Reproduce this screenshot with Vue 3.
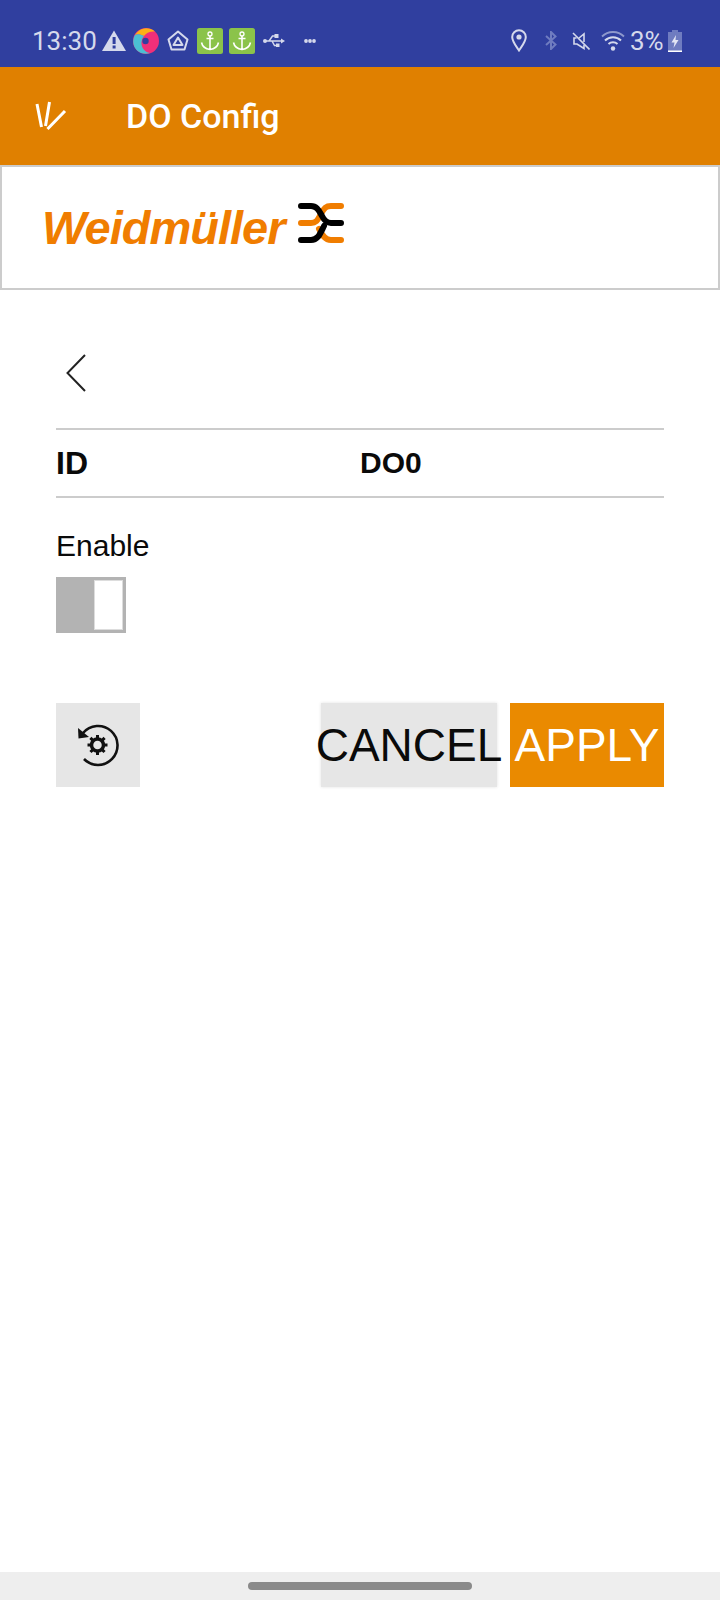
<template>
  <div class="page">
    <div class="status_bar">
      <span class="time">13:30</span>
      <svg class="ic warn" width="24" height="21" viewBox="0 0 24 21">
        <path d="M12 0.5 L24 21 H0 Z" fill="#d5d9ec" />
        <rect x="10.6" y="7" width="3" height="7" fill="#303f9f" />
        <rect x="10.6" y="15.5" width="3" height="3" fill="#303f9f" />
      </svg>
      <svg class="ic swirl" width="26" height="26" viewBox="0 0 26 26">
        <circle cx="13" cy="13" r="13" fill="#ef2f79" />
        <path d="M2 7 A13 13 0 0 1 22 3.5 C17 3 13 5 11 8 C7 6 4 6 2 7 Z" fill="#fbb117" />
        <path d="M2 7 C-2 14 1 22 8 25 C11 26 14 26 17 25 C11 24 8 19 8.5 14 C9 11 10 9 11 8 C7 6 4 6 2 7 Z" fill="#4bbfd3" />
        <circle cx="12.500" cy="13" r="3.200" fill="#303f9f" />
      </svg>
      <svg class="ic tri" width="22" height="21" viewBox="0 0 22 21">
        <path d="M11 1.5 L20.500 9.500 L17.500 19.500 H4.500 L1.500 9.500 Z" fill="none" stroke="#d5d9ec" stroke-width="2" stroke-linejoin="round" />
        <path d="M11 7.500 L15.500 15 H6.500 Z" fill="none" stroke="#d5d9ec" stroke-width="2" stroke-linejoin="round" />
      </svg>
      <svg v-for="n in 2" :key="n" class="ic anchor" width="26" height="26" viewBox="0 0 26 26">
        <rect width="26" height="26" rx="2.500" fill="#8bc34a" />
        <circle cx="13" cy="6" r="2" fill="none" stroke="#fff" stroke-width="1.300" />
        <path d="M13 8 V21 M9.500 10.500 H16.500 M4.500 14.500 C5.500 19 9 21 13 21.500 C17 21 20.500 19 21.500 14.500" fill="none" stroke="#fff" stroke-width="1.600" />
      </svg>
      <svg class="ic usb" width="22" height="16" viewBox="0 0 22 16">
        <path d="M2 8 H19 M6 8 L9.500 3 H12 M9 8 L11.500 12.500 H14" fill="none" stroke="#d5d9ec" stroke-width="1.500" />
        <circle cx="2" cy="8" r="2" fill="#d5d9ec" />
        <rect x="11.500" y="1" width="4" height="4" fill="#d5d9ec" />
        <rect x="13" y="10.500" width="3.500" height="3.500" fill="#d5d9ec" />
        <path d="M18 5.500 L22 8 L18 10.500 Z" fill="#d5d9ec" />
      </svg>
      <svg class="ic dots" width="12" height="4" viewBox="0 0 12 4">
        <circle cx="2" cy="2" r="1.900" fill="#d5d9ec" />
        <circle cx="6" cy="2" r="1.900" fill="#d5d9ec" />
        <circle cx="10" cy="2" r="1.900" fill="#d5d9ec" />
      </svg>
      <div class="status_right">
        <svg class="ic" width="16" height="23" viewBox="0 0 16 23">
          <path d="M8 21.500 C5 17 1.200 12.500 1.200 8 A6.800 6.800 0 0 1 14.800 8 C14.800 12.500 11 17 8 21.500 Z" fill="none" stroke="#d5d9ec" stroke-width="2" />
          <circle cx="8" cy="8" r="2.600" fill="#d5d9ec" />
        </svg>
        <svg class="ic bt" width="12" height="19" viewBox="0 0 12 19">
          <path d="M1 5 L10.500 13.500 L6 18 V1 L10.500 5.500 L1 14" fill="none" stroke="#6f7cc0" stroke-width="2" />
        </svg>
        <svg class="ic mute" width="18" height="18" viewBox="0 0 18 18">
          <path d="M12 10 V2 L7 6 M4.500 6 H2 V12 H5 L12 16.500 V13" fill="none" stroke="#d5d9ec" stroke-width="1.600" />
          <path d="M1 1 L17.500 17.500" stroke="#d5d9ec" stroke-width="1.600" />
        </svg>
        <svg class="ic wifi" width="24" height="21" viewBox="0 0 24 21">
          <path d="M1 6.500 C7 0.500 17 0.500 23 6.500" fill="none" stroke="#8e98cc" stroke-width="1.800" />
          <path d="M4 10.500 C8.500 6 15.500 6 20 10.500 M7.500 14 C10 11.800 14 11.800 16.500 14" fill="none" stroke="#d5d9ec" stroke-width="2" />
          <circle cx="12" cy="18.500" r="2.200" fill="#d5d9ec" />
        </svg>
        <span class="percent">3%</span>
        <svg class="ic batt" width="14" height="22" viewBox="0 0 14 22">
          <path d="M4 0 H10 V2 H14 V22 H0 V2 H4 Z" fill="#6f7cc0" />
          <rect x="0" y="20.500" width="14" height="1.500" fill="#fff" />
          <path d="M8 5 L3.500 12.500 H6.500 L5.500 18 L10.500 10 H7.500 Z" fill="#e3e6f4" />
        </svg>
      </div>
    </div>

    <header class="app_bar">
      <svg class="drawer" width="32" height="32" viewBox="0 0 32 32">
        <path d="M2 4 L6.500 27 M14.500 2 L10.500 26 M30 11 L12.500 29" fill="none" stroke="#fff" stroke-width="3" />
      </svg>
      <h1 class="title">DO Config</h1>
    </header>

    <div class="logo_box">
      <span class="logo_text">Weidmüller</span>
      <svg class="logo_mark" width="46" height="42" viewBox="0 0 46 42">
        <path d="M3 21 H13 C19 21 20 17 23 12 C26 6 28 4 33 4 H43" fill="none" stroke="#f07d00" stroke-width="6" stroke-linecap="round" />
        <path d="M3 4 H13 C19 4 21 9 24 14 C26 18 28 21 33 21 H43" fill="none" stroke="#000" stroke-width="6" stroke-linecap="round" />
        <path d="M21 27 C24 33 27 38 33 38 H43" fill="none" stroke="#f07d00" stroke-width="6" stroke-linecap="round" />
        <path d="M3 38 H13 C20 38 22 32 26 24" fill="none" stroke="#000" stroke-width="6" stroke-linecap="round" />
      </svg>
    </div>

    <main class="content">
      <svg class="back" width="20" height="38" viewBox="0 0 20 38">
        <path d="M19 1 L1.500 19 L19 37" fill="none" stroke="#222" stroke-width="2" />
      </svg>

      <div class="id_row">
        <span class="id_label">ID</span>
        <span class="id_value">DO0</span>
      </div>

      <p class="enable_label">Enable</p>
      <div class="toggle">
        <div class="knob"></div>
      </div>

      <div class="actions">
        <button class="btn icon_btn">
          <svg width="42" height="44" viewBox="0 0 42 44">
            <path d="M6 10 A19.500 19.500 0 1 1 7 36" fill="none" stroke="#111" stroke-width="2.600" />
            <path d="M1 5 L1.500 15.500 L12 14 Z" fill="#111" />
            <circle cx="20.500" cy="22" r="6" fill="none" stroke="#111" stroke-width="3.500" />
            <path d="M20.500 12 V32 M10.500 22 H30.500 M13.400 14.900 L27.600 29.100 M27.600 14.900 L13.400 29.100" stroke="#111" stroke-width="3" stroke-dasharray="3.500 13 3.500" />
          </svg>
        </button>
        <button class="btn cancel">CANCEL</button>
        <button class="btn apply">APPLY</button>
      </div>
    </main>

    <div class="nav_bar">
      <div class="nav_pill"></div>
    </div>
  </div>
</template>

<script setup>
</script>

<style>
html, body {
  margin: 0;
  background: #fff;
}
</style>

<style scoped>
.page {
  display: flex;
  flex-direction: column;
  width: 720px;
  height: 1600px;
  background: #fff;
  font-family: "Liberation Sans", sans-serif;
}

.status_bar {
  display: flex;
  align-items: center;
  box-sizing: border-box;
  height: 67px;
  padding: 14px 0 0 32px;
  background: #303f9f;
  color: #d5d9ec;
  font-family: Roboto, sans-serif;
}
.ic {
  display: block;
  flex: none;
}
.time {
  width: 70px;
  font-size: 26px;
  line-height: 30px;
}
.swirl {
  margin-left: 7px;
}
.tri {
  margin-left: 8px;
}
.anchor {
  margin-left: 6px;
}
.anchor:nth-of-type(4) {
  margin-left: 8px;
}
.usb {
  margin-left: 8px;
}
.dots {
  margin-left: 19px;
}
.status_right {
  display: flex;
  align-items: center;
  margin-left: auto;
  margin-right: 38px;
}
.bt {
  margin-left: 18px;
}
.mute {
  margin-left: 15px;
}
.wifi {
  margin-left: 11px;
}
.percent {
  margin-left: 5px;
  width: 38px;
  font-size: 26px;
  line-height: 30px;
}
.batt {
  margin-left: 0;
}

.app_bar {
  display: flex;
  align-items: center;
  height: 98px;
  padding-left: 35px;
  background: #e08000;
}
.drawer {
  margin-right: 59px;
}
.title {
  margin: 0;
  font-family: Roboto, sans-serif;
  font-size: 34px;
  font-weight: 500;
  color: #fff;
}

.logo_box {
  display: flex;
  align-items: center;
  box-sizing: border-box;
  height: 125px;
  padding-left: 40px;
  border: 2px solid #cccccc;
}
.logo_text {
  font-size: 47px;
  font-style: italic;
  font-weight: 700;
  line-height: 50px;
  color: #f07d00;
  letter-spacing: -1px;
}
.logo_mark {
  margin: -10px 0 0 14px;
}

.content {
  display: flex;
  flex-direction: column;
  flex: 1;
  padding: 64px 56px 0;
}
.back {
  display: block;
  margin: 0 0 36px 10px;
}
.id_row {
  display: flex;
  align-items: center;
  height: 66px;
  border-top: 2px solid #cccccc;
  border-bottom: 2px solid #cccccc;
  color: #0a0a0a;
}
.id_label {
  width: 304px;
  font-size: 32px;
  font-weight: 700;
}
.id_value {
  font-size: 30px;
  font-weight: 700;
}
.enable_label {
  margin: 30px 0 0;
  font-family: "Liberation Sans Narrow", "Liberation Sans", sans-serif;
  font-size: 30px;
  line-height: 36px;
  color: #0a0a0a;
}
.toggle {
  display: flex;
  justify-content: flex-end;
  box-sizing: border-box;
  width: 70px;
  height: 56px;
  margin-top: 13px;
  padding: 3px;
  background: #b3b3b3;
}
.knob {
  box-sizing: border-box;
  width: 29px;
  border: 1px solid #dddddd;
  background: #fff;
}
.actions {
  display: flex;
  margin-top: 70px;
}
.btn {
  display: flex;
  align-items: center;
  justify-content: center;
  box-sizing: border-box;
  height: 84px;
  padding: 0;
  border: none;
  border-radius: 0;
  font-family: "Liberation Sans Narrow", "Liberation Sans", sans-serif;
  font-size: 46px;
  background: #e6e6e6;
}
.icon_btn {
  width: 84px;
}
.cancel {
  width: 176px;
  margin-left: auto;
  color: #0a0a0a;
  box-shadow: 0 0 3px rgba(0, 0, 0, 0.12);
}
.apply {
  width: 154px;
  margin-left: 13px;
  color: #fff;
  background: #ea8a00;
}

.nav_bar {
  display: flex;
  align-items: center;
  justify-content: center;
  height: 28px;
  background: #eeeeee;
}
.nav_pill {
  width: 224px;
  height: 8px;
  border-radius: 4px;
  background: #8a8a8a;
}
</style>
